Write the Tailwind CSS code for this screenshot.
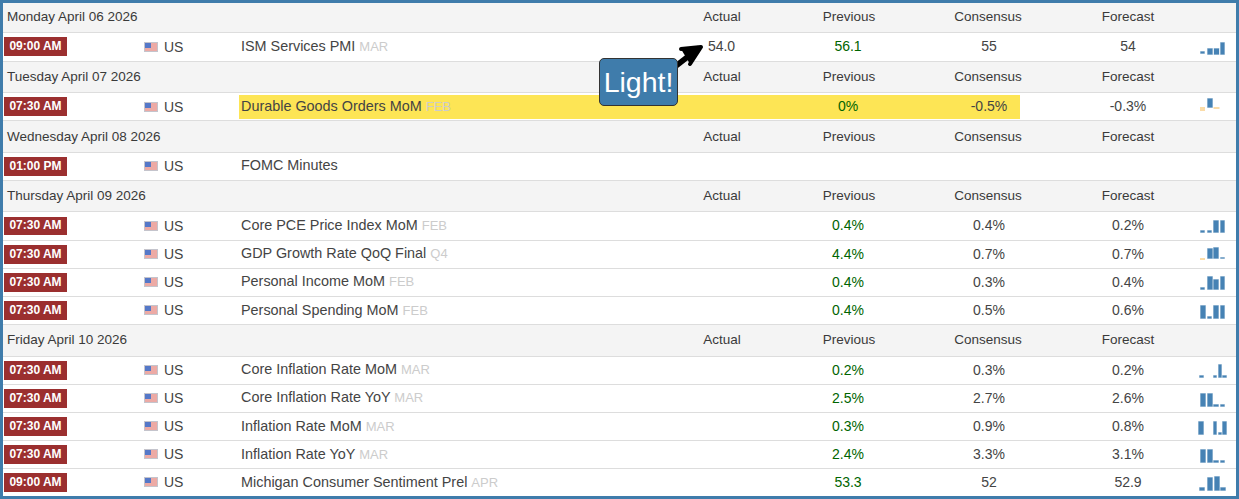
<!DOCTYPE html>
<html>
<head>
<meta charset="utf-8">
<script src="https://cdn.jsdelivr.net/npm/@tailwindcss/browser@4"></script>
</head>
<body class="bg-white">
<svg width="0" height="0" class="absolute"><defs>
<g id="f"><rect x="0.5" y="0.5" width="13" height="9" fill="#f7ecec" stroke="#c4c4cc"/><path d="M1 2h12M1 4h12M1 6h12M1 8h12" stroke="#e2685f" stroke-width="1"/><rect x="1" y="1" width="6" height="5" fill="#5578c8"/></g>
</defs></svg>
<div class="relative w-[1239px] h-[499px] overflow-hidden border-[3px] border-[#3f7cab] bg-white font-['Liberation_Sans',Arial,sans-serif] text-[14px] leading-none text-[#444]">

<!-- Monday -->
<div class="flex h-[30px] items-start border-b border-[#ddd] bg-[#f4f4f4] text-[13.5px] text-[#3a3a3a] pt-[7px]"><div class="w-[677px] pl-1">Monday April 06 2026</div><div class="w-[84px] text-center">Actual</div><div class="w-[170px] text-center">Previous</div><div class="w-[102px] ml-[3px] text-center">Consensus</div><div class="w-[70px] ml-[54px] text-center">Forecast</div></div>
<div class="flex h-[29px] items-start border-b border-[#ddd]">
 <div class="w-[140px] pl-px pt-1"><div class="w-[63px] h-[19px] bg-[#9b2f2f] text-white font-bold text-[12px] leading-[18px] text-center">09:00 AM</div></div>
 <div class="flex w-[96px] items-center pl-px pt-[7px]"><svg width="14" height="10"><use href="#f"/></svg><span class="ml-[6px]">US</span></div>
 <div class="w-[441px] pl-[2px] pt-[6px] text-[14.4px]">ISM Services PMI <span class="text-[13px] text-[#ccc]">MAR</span></div>
 <div class="w-[83px] text-center pt-[6px]">54.0</div><div class="w-[170px] text-center pt-[6px] text-[#006400]">56.1</div><div class="w-[62px] ml-[25px] text-center pt-[6px]">55</div><div class="w-[70px] ml-[73px] text-center pt-[6px]">54</div>
 <svg width="30" height="28" class="ml-[35px]"><g fill="#4682b4" stroke="#4682b4" stroke-opacity=".3"><rect x="2.5" y="18.5" width="4" height="2"/><rect x="9.5" y="15.5" width="5" height="6"/><rect x="16" y="15.5" width="5" height="6"/><rect x="22.5" y="9.5" width="4" height="12"/></g></svg>
</div>

<!-- Tuesday -->
<div class="flex h-[31px] items-start border-b border-[#ddd] bg-[#f4f4f4] text-[13.5px] text-[#3a3a3a] pt-[8px]"><div class="w-[677px] pl-1">Tuesday April 07 2026</div><div class="w-[84px] text-center">Actual</div><div class="w-[170px] text-center">Previous</div><div class="w-[102px] ml-[3px] text-center">Consensus</div><div class="w-[70px] ml-[54px] text-center">Forecast</div></div>
<div class="flex h-[28px] items-start border-b border-[#ddd]">
 <div class="w-[140px] pl-px pt-1"><div class="w-[63px] h-[19px] bg-[#9b2f2f] text-white font-bold text-[12px] leading-[18px] text-center">07:30 AM</div></div>
 <div class="flex w-[96px] items-center pl-px pt-[7px]"><svg width="14" height="10"><use href="#f"/></svg><span class="ml-[6px]">US</span></div>
 <div class="mt-[2px] flex h-[24px] items-start bg-[#fde555]">
  <div class="w-[441px] pl-[2px] pt-[4px] text-[14.4px]">Durable Goods Orders MoM <span class="text-[13px] text-[#ccc]">FEB</span></div>
  <div class="w-[83px]"></div><div class="w-[170px] text-center pt-[4px] text-[#006400]">0%</div><div class="w-[62px] ml-[25px] text-center pt-[4px]">-0.5%</div>
 </div>
 <div class="w-[70px] ml-[73px] text-center pt-[6px]">-0.3%</div>
 <svg width="30" height="28" class="ml-[35px]"><rect x="2.5" y="14.5" width="4" height="3" fill="#fbdca8" stroke="#fbdca8"/><rect x="9.5" y="5.5" width="5" height="9" fill="#4682b4" stroke="#4682b4" stroke-opacity=".3"/><rect x="16" y="14.5" width="5" height="1" fill="#fbdca8" stroke="#fbdca8"/></svg>
</div>

<!-- Wednesday -->
<div class="flex h-[32px] items-start border-b border-[#ddd] bg-[#f4f4f4] text-[13.5px] text-[#3a3a3a] pt-[9px]"><div class="w-[677px] pl-1">Wednesday April 08 2026</div><div class="w-[84px] text-center">Actual</div><div class="w-[170px] text-center">Previous</div><div class="w-[102px] ml-[3px] text-center">Consensus</div><div class="w-[70px] ml-[54px] text-center">Forecast</div></div>
<div class="flex h-[28px] items-start border-b border-[#ddd]">
 <div class="w-[140px] pl-px pt-1"><div class="w-[63px] h-[19px] bg-[#9b2f2f] text-white font-bold text-[12px] leading-[18px] text-center">01:00 PM</div></div>
 <div class="flex w-[96px] items-center pl-px pt-[6px]"><svg width="14" height="10"><use href="#f"/></svg><span class="ml-[6px]">US</span></div>
 <div class="w-[441px] pl-[2px] pt-[5px] text-[14.4px]">FOMC Minutes</div>
</div>

<!-- Thursday -->
<div class="flex h-[31px] items-start border-b border-[#ddd] bg-[#f4f4f4] text-[13.5px] text-[#3a3a3a] pt-[8px]"><div class="w-[677px] pl-1">Thursday April 09 2026</div><div class="w-[84px] text-center">Actual</div><div class="w-[170px] text-center">Previous</div><div class="w-[102px] ml-[3px] text-center">Consensus</div><div class="w-[70px] ml-[54px] text-center">Forecast</div></div>
<div class="flex h-[29px] items-start border-b border-[#ddd]">
 <div class="w-[140px] pl-px pt-[5px]"><div class="w-[63px] h-[18px] bg-[#9b2f2f] text-white font-bold text-[12px] leading-[17px] text-center">07:30 AM</div></div>
 <div class="flex w-[96px] items-center pl-px pt-[7px]"><svg width="14" height="10"><use href="#f"/></svg><span class="ml-[6px]">US</span></div>
 <div class="w-[441px] pl-[2px] pt-[6px] text-[14.4px]">Core PCE Price Index MoM <span class="text-[13px] text-[#ccc]">FEB</span></div>
 <div class="w-[83px]"></div><div class="w-[170px] text-center pt-[6px] text-[#006400]">0.4%</div><div class="w-[62px] ml-[25px] text-center pt-[6px]">0.4%</div><div class="w-[70px] ml-[73px] text-center pt-[6px]">0.2%</div>
 <svg width="30" height="28" class="ml-[35px]"><g fill="#4682b4" stroke="#4682b4" stroke-opacity=".3"><rect x="2.5" y="18.5" width="4" height="2"/><rect x="9.5" y="18.5" width="4" height="2"/><rect x="15.5" y="8.5" width="5" height="12"/><rect x="22.5" y="8.5" width="4" height="12"/></g></svg>
</div>
<div class="flex h-[28px] items-start border-b border-[#ddd]">
 <div class="w-[140px] pl-px pt-1"><div class="w-[63px] h-[19px] bg-[#9b2f2f] text-white font-bold text-[12px] leading-[18px] text-center">07:30 AM</div></div>
 <div class="flex w-[96px] items-center pl-px pt-[6px]"><svg width="14" height="10"><use href="#f"/></svg><span class="ml-[6px]">US</span></div>
 <div class="w-[441px] pl-[2px] pt-[5px] text-[14.4px]">GDP Growth Rate QoQ Final <span class="text-[13px] text-[#ccc]">Q4</span></div>
 <div class="w-[83px]"></div><div class="w-[170px] text-center pt-[6px] text-[#006400]">4.4%</div><div class="w-[62px] ml-[25px] text-center pt-[6px]">0.7%</div><div class="w-[70px] ml-[73px] text-center pt-[6px]">0.7%</div>
 <svg width="30" height="28" class="ml-[35px]"><rect x="2.5" y="17.5" width="4" height="1" fill="#fbdca8" stroke="#fbdca8"/><g fill="#4682b4" stroke="#4682b4" stroke-opacity=".3"><rect x="9.5" y="7.5" width="5" height="10"/><rect x="15.5" y="6.5" width="5" height="11"/><rect x="22.5" y="16.5" width="4" height="1"/></g></svg>
</div>
<div class="flex h-[28px] items-start border-b border-[#ddd]">
 <div class="w-[140px] pl-px pt-1"><div class="w-[63px] h-[19px] bg-[#9b2f2f] text-white font-bold text-[12px] leading-[18px] text-center">07:30 AM</div></div>
 <div class="flex w-[96px] items-center pl-px pt-[6px]"><svg width="14" height="10"><use href="#f"/></svg><span class="ml-[6px]">US</span></div>
 <div class="w-[441px] pl-[2px] pt-[5px] text-[14.4px]">Personal Income MoM <span class="text-[13px] text-[#ccc]">FEB</span></div>
 <div class="w-[83px]"></div><div class="w-[170px] text-center pt-[6px] text-[#006400]">0.4%</div><div class="w-[62px] ml-[25px] text-center pt-[6px]">0.3%</div><div class="w-[70px] ml-[73px] text-center pt-[6px]">0.4%</div>
 <svg width="30" height="28" class="ml-[35px]"><g fill="#4682b4" stroke="#4682b4" stroke-opacity=".3"><rect x="2.5" y="18.5" width="4" height="2"/><rect x="9.5" y="7.5" width="5" height="13"/><rect x="15.5" y="10.5" width="5" height="10"/><rect x="22.5" y="7.5" width="4" height="13"/></g></svg>
</div>
<div class="flex h-[28px] items-start border-b border-[#ddd]">
 <div class="w-[140px] pl-px pt-1"><div class="w-[63px] h-[19px] bg-[#9b2f2f] text-white font-bold text-[12px] leading-[18px] text-center">07:30 AM</div></div>
 <div class="flex w-[96px] items-center pl-px pt-[6px]"><svg width="14" height="10"><use href="#f"/></svg><span class="ml-[6px]">US</span></div>
 <div class="w-[441px] pl-[2px] pt-[6px] text-[14.4px]">Personal Spending MoM <span class="text-[13px] text-[#ccc]">FEB</span></div>
 <div class="w-[83px]"></div><div class="w-[170px] text-center pt-[6px] text-[#006400]">0.4%</div><div class="w-[62px] ml-[25px] text-center pt-[6px]">0.5%</div><div class="w-[70px] ml-[73px] text-center pt-[6px]">0.6%</div>
 <svg width="30" height="28" class="ml-[35px]"><g fill="#4682b4" stroke="#4682b4" stroke-opacity=".3"><rect x="2.5" y="8.5" width="5" height="13"/><rect x="9.5" y="19.5" width="4" height="2"/><rect x="15.5" y="8.5" width="5" height="13"/><rect x="22.5" y="8.5" width="4" height="13"/></g></svg>
</div>

<!-- Friday -->
<div class="flex h-[32px] items-start border-b border-[#ddd] bg-[#f4f4f4] text-[13.5px] text-[#3a3a3a] pt-[8px]"><div class="w-[677px] pl-1">Friday April 10 2026</div><div class="w-[84px] text-center">Actual</div><div class="w-[170px] text-center">Previous</div><div class="w-[102px] ml-[3px] text-center">Consensus</div><div class="w-[70px] ml-[54px] text-center">Forecast</div></div>
<div class="flex h-[28px] items-start border-b border-[#ddd]">
 <div class="w-[140px] pl-px pt-1"><div class="w-[63px] h-[19px] bg-[#9b2f2f] text-white font-bold text-[12px] leading-[18px] text-center">07:30 AM</div></div>
 <div class="flex w-[96px] items-center pl-px pt-[6px]"><svg width="14" height="10"><use href="#f"/></svg><span class="ml-[6px]">US</span></div>
 <div class="w-[441px] pl-[2px] pt-[5px] text-[14.4px]">Core Inflation Rate MoM <span class="text-[13px] text-[#ccc]">MAR</span></div>
 <div class="w-[83px]"></div><div class="w-[170px] text-center pt-[6px] text-[#006400]">0.2%</div><div class="w-[62px] ml-[25px] text-center pt-[6px]">0.3%</div><div class="w-[70px] ml-[73px] text-center pt-[6px]">0.2%</div>
 <svg width="30" height="28" class="ml-[35px]"><g fill="#4682b4" stroke="#4682b4" stroke-opacity=".3"><rect x="1.5" y="18.5" width="4" height="2"/><rect x="15.5" y="18.5" width="3" height="2"/><rect x="20.5" y="7.5" width="3" height="13"/><rect x="24.5" y="18.5" width="4" height="2"/></g></svg>
</div>
<div class="flex h-[28px] items-start border-b border-[#ddd]">
 <div class="w-[140px] pl-px pt-1"><div class="w-[63px] h-[19px] bg-[#9b2f2f] text-white font-bold text-[12px] leading-[18px] text-center">07:30 AM</div></div>
 <div class="flex w-[96px] items-center pl-px pt-[6px]"><svg width="14" height="10"><use href="#f"/></svg><span class="ml-[6px]">US</span></div>
 <div class="w-[441px] pl-[2px] pt-[5px] text-[14.4px]">Core Inflation Rate YoY <span class="text-[13px] text-[#ccc]">MAR</span></div>
 <div class="w-[83px]"></div><div class="w-[170px] text-center pt-[6px] text-[#006400]">2.5%</div><div class="w-[62px] ml-[25px] text-center pt-[6px]">2.7%</div><div class="w-[70px] ml-[73px] text-center pt-[6px]">2.6%</div>
 <svg width="30" height="28" class="ml-[35px]"><g fill="#4682b4" stroke="#4682b4" stroke-opacity=".3"><rect x="2.5" y="8.5" width="5" height="13"/><rect x="9.5" y="8.5" width="5" height="13"/><rect x="15.5" y="19.5" width="5" height="2"/><rect x="22.5" y="19.5" width="4" height="2"/></g></svg>
</div>
<div class="flex h-[28px] items-start border-b border-[#ddd]">
 <div class="w-[140px] pl-px pt-1"><div class="w-[63px] h-[19px] bg-[#9b2f2f] text-white font-bold text-[12px] leading-[18px] text-center">07:30 AM</div></div>
 <div class="flex w-[96px] items-center pl-px pt-[6px]"><svg width="14" height="10"><use href="#f"/></svg><span class="ml-[6px]">US</span></div>
 <div class="w-[441px] pl-[2px] pt-[6px] text-[14.4px]">Inflation Rate MoM <span class="text-[13px] text-[#ccc]">MAR</span></div>
 <div class="w-[83px]"></div><div class="w-[170px] text-center pt-[6px] text-[#006400]">0.3%</div><div class="w-[62px] ml-[25px] text-center pt-[6px]">0.9%</div><div class="w-[70px] ml-[73px] text-center pt-[6px]">0.8%</div>
 <svg width="30" height="28" class="ml-[35px]"><g fill="#4682b4" stroke="#4682b4" stroke-opacity=".3"><rect x="0.5" y="8.5" width="5" height="13"/><rect x="15.5" y="8.5" width="3" height="13"/><rect x="20.5" y="19.5" width="3" height="2"/><rect x="24.5" y="8.5" width="4" height="13"/></g></svg>
</div>
<div class="flex h-[28px] items-start border-b border-[#ddd]">
 <div class="w-[140px] pl-px pt-1"><div class="w-[63px] h-[19px] bg-[#9b2f2f] text-white font-bold text-[12px] leading-[18px] text-center">07:30 AM</div></div>
 <div class="flex w-[96px] items-center pl-px pt-[6px]"><svg width="14" height="10"><use href="#f"/></svg><span class="ml-[6px]">US</span></div>
 <div class="w-[441px] pl-[2px] pt-[6px] text-[14.4px]">Inflation Rate YoY <span class="text-[13px] text-[#ccc]">MAR</span></div>
 <div class="w-[83px]"></div><div class="w-[170px] text-center pt-[6px] text-[#006400]">2.4%</div><div class="w-[62px] ml-[25px] text-center pt-[6px]">3.3%</div><div class="w-[70px] ml-[73px] text-center pt-[6px]">3.1%</div>
 <svg width="30" height="28" class="ml-[35px]"><g fill="#4682b4" stroke="#4682b4" stroke-opacity=".3"><rect x="2.5" y="8.5" width="5" height="13"/><rect x="9.5" y="8.5" width="5" height="13"/><rect x="15.5" y="19.5" width="5" height="2"/><rect x="22.5" y="19.5" width="4" height="2"/></g></svg>
</div>
<div class="flex h-[28px] items-start">
 <div class="w-[140px] pl-px pt-1"><div class="w-[63px] h-[19px] bg-[#9b2f2f] text-white font-bold text-[12px] leading-[18px] text-center">09:00 AM</div></div>
 <div class="flex w-[96px] items-center pl-px pt-[6px]"><svg width="14" height="10"><use href="#f"/></svg><span class="ml-[6px]">US</span></div>
 <div class="w-[441px] pl-[2px] pt-[6px] text-[14.4px]">Michigan Consumer Sentiment Prel <span class="text-[13px] text-[#ccc]">APR</span></div>
 <div class="w-[83px]"></div><div class="w-[170px] text-center pt-[6px] text-[#006400]">53.3</div><div class="w-[62px] ml-[25px] text-center pt-[6px]">52</div><div class="w-[70px] ml-[73px] text-center pt-[6px]">52.9</div>
 <svg width="30" height="28" class="ml-[35px]"><g fill="#4682b4" stroke="#4682b4" stroke-opacity=".3"><rect x="1.5" y="18.5" width="5" height="3"/><rect x="9.5" y="8.5" width="5" height="13"/><rect x="16.5" y="7.5" width="5" height="14"/><rect x="22.5" y="18.5" width="5" height="3"/></g></svg>
</div>

<!-- Callout -->
<svg class="absolute left-[667px] top-[35px]" width="40" height="36"><path d="M11 11 L31 9 L20 26" fill="#000" stroke="#000" stroke-width="4" stroke-linejoin="round" stroke-linecap="round"/><path d="M2 31 L29 10" stroke="#000" stroke-width="5.5" fill="none"/></svg>
<div class="absolute left-[596px] top-[55px] flex h-[48px] w-[79px] items-center justify-center rounded-[5px] border-[1.5px] border-[#333] bg-[#3f7cab] text-[28.5px] text-white">Light!</div>
</div>
</body>
</html>
